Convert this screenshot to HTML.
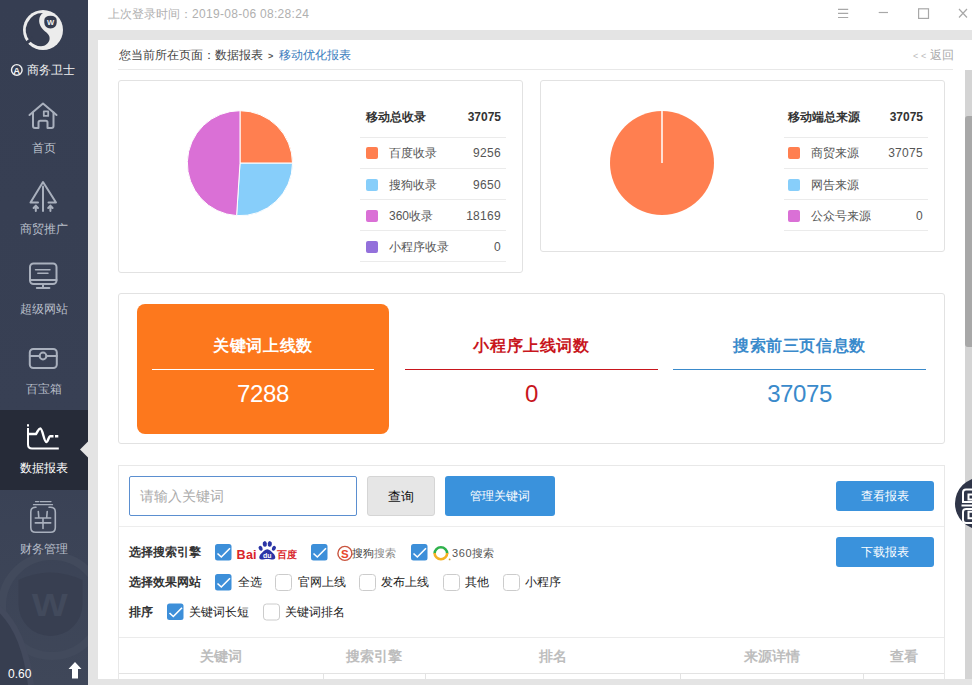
<!DOCTYPE html>
<html><head><meta charset="utf-8">
<style>
*{margin:0;padding:0;box-sizing:border-box;}
html,body{width:972px;height:685px;overflow:hidden;background:#e4e4e4;font-family:"Liberation Sans",sans-serif;font-size:12px;color:#555;}
.a{position:absolute;}
.t{position:absolute;white-space:nowrap;line-height:1;}
#side{left:0;top:0;width:88px;height:685px;background:#373e51;overflow:hidden;}
.nav{position:absolute;left:0;width:88px;height:80px;}
.nav .lb{position:absolute;left:0;width:88px;text-align:center;font-size:12px;color:#b9bfca;line-height:12px;}
.nav svg{position:absolute;left:0;top:0;}
#top{left:88px;top:0;width:884px;height:30px;background:#fff;}
#main{left:98px;top:40px;width:874px;height:639px;background:#fff;}
.card{position:absolute;background:#fff;border:1px solid #e2e2e2;border-radius:3px;}
.lg{position:absolute;font-size:12px;color:#555;}
.lg .row{position:absolute;left:0;height:31px;border-bottom:1px solid #ebebeb;}
.sq{position:absolute;width:12px;height:12px;border-radius:2px;}
.cb{position:absolute;width:16px;height:16px;border-radius:2px;background:#3d8fd9;}
.cbu{position:absolute;width:16px;height:16px;border-radius:3px;background:#fff;border:1px solid #cfcfcf;}
.btn{position:absolute;background:#3a92dc;color:#fff;border-radius:3px;text-align:center;font-size:12px;}
</style></head><body>
<div id="side" class="a">
<svg class="a" style="left:0;top:0" width="88" height="685" viewBox="0 0 88 685">
  <defs>
    <linearGradient id="sg" x1="0" y1="0" x2="0" y2="1">
      <stop offset="0" stop-color="#363e52"/>
      <stop offset="0.6" stop-color="#384054"/>
      <stop offset="1" stop-color="#3f4759"/>
    </linearGradient>
  </defs>
  <rect x="0" y="0" width="88" height="685" fill="url(#sg)"/>
  <!-- watermark -->
  <circle cx="52" cy="606" r="50" fill="none" stroke="#424a5c" stroke-width="8"/>
  <path d="M0,612 C16,626 28,650 33,685 L0,685 Z" fill="#373e50"/>
  <path d="M-4,606 C14,620 26,644 31,685" fill="none" stroke="#434a5d" stroke-width="6"/>
  <path d="M18.5,580 Q50,565 82.5,580 L82.5,604 A32,32 0 0 1 18.5,604 Z" fill="#383f51"/>
  <text x="31.7" y="616" font-family="Liberation Sans" font-weight="bold" font-size="31" textLength="36" lengthAdjust="spacingAndGlyphs" fill="#424a5c">W</text>
  <!-- active -->
  <rect x="0" y="410" width="88" height="80" fill="#262b38"/>
  <polygon points="80,449.5 88,441.5 88,457.5" fill="#e4e4e4"/>
  <!-- logo -->
  <circle cx="43" cy="30" r="20" fill="#ececec"/>
  <path d="M43,13 C40,15 38.5,19 39.5,23.5 C40.5,27 42,28.5 44,30.5 C47,33 50,35 49.6,39 C49.2,43 45.5,46.2 41,46.2 C36.5,46.2 33,44 29.9,40.9 A17,17 0 0 1 43,13 Z" fill="#363d50"/>
  <line x1="33" y1="37.9" x2="25.2" y2="44" stroke="#363d50" stroke-width="3.2"/>
  <path d="M44.3,20 Q44.5,16 50.5,15.8 Q56.5,16 56.7,20 L56.7,22.5 Q56.5,28 50.5,28.6 Q44.5,28 44.3,22.5 Z" fill="#363d50"/>
  <text x="50.5" y="25" text-anchor="middle" font-family="Liberation Sans" font-weight="bold" font-size="7.6" fill="#f4f4f4">W</text>
  <circle cx="16.8" cy="69.9" r="5.3" fill="none" stroke="#f2f2f2" stroke-width="1.4"/>
  <text x="16.8" y="73.5" text-anchor="middle" font-family="Liberation Sans" font-weight="bold" font-size="9.5" fill="#f2f2f2">A</text>
  <g fill="none" stroke="#a9b0bd" stroke-width="2" stroke-linecap="round" stroke-linejoin="round">
    <!-- house -->
    <polyline points="29.5,115 43,103.5 56.5,115"/>
    <path d="M33,112.5 L33,126 Q33,128 35,128 L38.5,128 L38.5,122.5 Q38.5,120.8 40.3,120.8 L45.7,120.8 Q47.5,120.8 47.5,122.5 L47.5,128 L51.5,128 Q53.5,128 53.5,126 L53.5,112.5"/>
    <rect x="43.8" y="111.3" width="4.4" height="4.6" stroke-width="1.8"/>
    <!-- arrow -->
    <path d="M38,202.5 L30.5,202.5 L43,182 L56,202.5 L48.5,202.5"/>
    <path d="M43,186.5 L43,211"/>
    <path d="M35.8,211 L35.8,206 M33.6,208 L35.8,205.6 L38,208"/>
    <path d="M50.4,211 L50.4,206 M48.2,208 L50.4,205.6 L52.6,208"/>
    <!-- monitor -->
    <rect x="30" y="263.5" width="26.5" height="20.5" rx="3.5"/>
    <path d="M30,280 L56.5,280"/>
    <path d="M35.5,269.8 L50,269.8 M37.8,273.3 L48,273.3" stroke-width="1.5"/>
    <path d="M43,284 L43,287.8 M36.8,288 L49.4,288"/>
    <!-- box -->
    <rect x="29.8" y="349" width="27" height="19" rx="3.5"/>
    <path d="M29.8,356 L39.6,356 M46.4,356 L56.8,356"/>
    <circle cx="43" cy="356" r="3.4"/>
    <!-- finance -->
    <path d="M35.5,501.6 L38.6,501.6 M40.2,501.6 L51,501.6 M33.5,504.7 L52.5,504.7" stroke-width="1.3"/>
    <path d="M36,507.3 L35.5,507.3 Q30.8,507.3 30.8,512 L30.8,527.6 Q30.8,532.3 35.5,532.3 L50.6,532.3 Q55.3,532.3 55.3,527.6 L55.3,512 Q55.3,507.3 50.6,507.3 L49,507.3" stroke-width="1.6"/>
    <path d="M38.3,511.5 L38.8,517.5 M47.2,511.5 L46.7,517.5 M35.3,518 L50.7,518 M35.3,522.9 L50.7,522.9 M43,518 L43,528.5" stroke-width="1.6"/>
  </g>
  <g fill="none" stroke="#ffffff" stroke-width="2" stroke-linecap="butt" stroke-linejoin="round">
    <path d="M28,424.3 L28,426.5 M28,428 L28,444.5 Q28,448.5 32,448.5 L58.8,448.5"/>
    <path d="M28,434 L36,434 C38,431 38.6,428.5 40.3,428.5 C42.6,428.5 44,442 46.3,442 C48,442 48.6,436.4 50,436.3 L53.5,436.3 M55,436.3 L58.3,436.3" stroke-width="2.4"/>
  </g>
  <!-- upload arrow -->
  <path d="M75,662 L81.5,669 L78,669 L78,678.5 L72,678.5 L72,669 L68.5,669 Z" fill="#ffffff"/>
</svg>
<div class="t" style="left:27px;top:64px;font-size:12px;color:#f2f2f2;">商务卫士</div>
<div class="t" style="left:0;width:88px;text-align:center;top:142px;color:#b9bfca;">首页</div>
<div class="t" style="left:0;width:88px;text-align:center;top:223px;color:#b9bfca;">商贸推广</div>
<div class="t" style="left:0;width:88px;text-align:center;top:303px;color:#b9bfca;">超级网站</div>
<div class="t" style="left:0;width:88px;text-align:center;top:383px;color:#b9bfca;">百宝箱</div>
<div class="t" style="left:0;width:88px;text-align:center;top:462px;color:#ffffff;">数据报表</div>
<div class="t" style="left:0;width:88px;text-align:center;top:543px;color:#b9bfca;">财务管理</div>
<div class="t" style="left:8px;top:668px;font-size:12px;color:#ffffff;">0.60</div>
</div>
<div id="top" class="a">
  <div class="t" style="left:20px;top:8px;font-size:12px;color:#b0b0b0;">上次登录时间：<span style="letter-spacing:0.3px">2019-08-06 08:28:24</span></div>
  <svg class="a" style="left:0;top:0" width="884" height="30" viewBox="88 0 884 30">
    <g stroke="#a8a8a8" stroke-width="1.2" fill="none">
      <path d="M838,9.3 L848.2,9.3 M838,13.4 L848.2,13.4 M838,17.5 L848.2,17.5"/>
      <path d="M878.7,12.5 L888,12.5"/>
      <rect x="918.6" y="8.8" width="9.9" height="9.6"/>
      <path d="M959,9 L967,17.5 M967,9 L959,17.5"/>
    </g>
  </svg>
</div>
<div id="main" class="a">
  <div class="t" style="left:21px;top:9px;color:#444;">您当前所在页面：数据报表</div>
  <div class="t" style="left:170px;top:12px;color:#555;font-size:9px;font-weight:bold;">&gt;</div>
  <div class="t" style="left:181px;top:9px;color:#3a7cbd;">移动优化报表</div>
  <div class="t" style="left:815px;top:12px;color:#bbb;font-size:9px;">&lt;</div><div class="t" style="left:823px;top:12px;color:#bbb;font-size:9px;">&lt;</div><div class="t" style="left:832px;top:9px;color:#aaa;">返回</div>
  <div class="a" style="left:20px;top:29px;width:835px;height:1px;background:#e8e8e8;"></div>
</div>
<!-- scrollbar -->
<div class="a" style="left:965px;top:70px;width:7px;height:609px;background:#d4d4d4;"></div>
<div class="a" style="left:965px;top:116px;width:7px;height:231px;background:#a8a8a8;border-radius:3px 0 0 3px;"></div>
<div class="a" style="left:88px;top:679px;width:884px;height:6px;background:#e4e4e4;"></div>

<!-- card 1 -->
<div class="card" style="left:118px;top:80px;width:405px;height:193px;"></div>
<svg class="a" style="left:180px;top:103px" width="120" height="120" viewBox="180 103 120 120">
  <path d="M240,163.2 L240,110.7 A52.5,52.5 0 0 1 292.5,163.2 Z" fill="#ff7f50" stroke="#fff" stroke-width="1"/>
  <path d="M240,163.2 L292.5,163.2 A52.5,52.5 0 0 1 236.6,215.6 Z" fill="#87cefa" stroke="#fff" stroke-width="1"/>
  <path d="M240,163.2 L236.6,215.6 A52.5,52.5 0 0 1 240,110.7 Z" fill="#da70d6" stroke="#fff" stroke-width="1"/>
</svg>
<div class="a" style="left:360px;top:106px;width:146px;">
  <div class="t" style="left:6px;top:5px;font-weight:bold;color:#333;">移动总收录</div>
  <div class="t" style="right:5px;top:5px;font-weight:bold;color:#333;">37075</div>
  <div class="a" style="left:0;top:31px;width:146px;height:1px;background:#ebebeb;"></div>
  <div class="sq" style="left:6px;top:40.6px;background:#ff7f50;"></div>
  <div class="t" style="left:29px;top:41px;">百度收录</div>
  <div class="t" style="right:5px;top:41px;letter-spacing:0.3px;">9256</div>
  <div class="a" style="left:0;top:62px;width:146px;height:1px;background:#ebebeb;"></div>
  <div class="sq" style="left:6px;top:72.6px;background:#87cefa;"></div>
  <div class="t" style="left:29px;top:73px;">搜狗收录</div>
  <div class="t" style="right:5px;top:73px;letter-spacing:0.3px;">9650</div>
  <div class="a" style="left:0;top:93px;width:146px;height:1px;background:#ebebeb;"></div>
  <div class="sq" style="left:6px;top:103.6px;background:#da70d6;"></div>
  <div class="t" style="left:29px;top:104px;">360收录</div>
  <div class="t" style="right:5px;top:104px;letter-spacing:0.3px;">18169</div>
  <div class="a" style="left:0;top:124px;width:146px;height:1px;background:#ebebeb;"></div>
  <div class="sq" style="left:6px;top:134.6px;background:#9370db;"></div>
  <div class="t" style="left:29px;top:135px;">小程序收录</div>
  <div class="t" style="right:5px;top:135px;letter-spacing:0.3px;">0</div>
  <div class="a" style="left:0;top:155px;width:146px;height:1px;background:#ebebeb;"></div>
</div>

<!-- card 2 -->
<div class="card" style="left:540px;top:80px;width:405px;height:172px;"></div>
<svg class="a" style="left:600px;top:103px" width="120" height="120" viewBox="600 103 120 120">
  <circle cx="662" cy="163" r="52" fill="#ff7f50"/>
  <path d="M662,163 L662,111" stroke="#fff" stroke-width="1.5"/>
</svg>
<div class="a" style="left:784px;top:106px;width:144px;">
  <div class="t" style="left:4px;top:5px;font-weight:bold;color:#333;">移动端总来源</div>
  <div class="t" style="right:5px;top:5px;font-weight:bold;color:#333;">37075</div>
  <div class="a" style="left:0;top:31px;width:144px;height:1px;background:#ebebeb;"></div>
  <div class="sq" style="left:4px;top:40.6px;background:#ff7f50;"></div>
  <div class="t" style="left:27px;top:41px;">商贸来源</div>
  <div class="t" style="right:5px;top:41px;letter-spacing:0.3px;">37075</div>
  <div class="a" style="left:0;top:62px;width:144px;height:1px;background:#ebebeb;"></div>
  <div class="sq" style="left:4px;top:72.6px;background:#87cefa;"></div>
  <div class="t" style="left:27px;top:73px;">网告来源</div>
  <div class="a" style="left:0;top:93px;width:144px;height:1px;background:#ebebeb;"></div>
  <div class="sq" style="left:4px;top:103.6px;background:#da70d6;"></div>
  <div class="t" style="left:27px;top:104px;">公众号来源</div>
  <div class="t" style="right:5px;top:104px;letter-spacing:0.3px;">0</div>
  <div class="a" style="left:0;top:124px;width:144px;height:1px;background:#ebebeb;"></div>
</div>

<!-- stats card -->
<div class="card" style="left:118px;top:293px;width:827px;height:151px;"></div>
<div class="a" style="left:137px;top:304px;width:252px;height:130px;background:#fd781d;border-radius:8px;"></div>
<div class="t" style="left:137px;width:252px;text-align:center;top:338px;font-size:16px;font-weight:bold;letter-spacing:0.6px;color:#fff;">关键词上线数</div>
<div class="a" style="left:152px;top:369px;width:222px;height:1px;background:#fff;"></div>
<div class="t" style="left:137px;width:252px;text-align:center;top:382px;font-size:24px;letter-spacing:-0.4px;color:#fff;">7288</div>

<div class="t" style="left:405px;width:253px;text-align:center;top:338px;font-size:16px;font-weight:bold;letter-spacing:0.6px;color:#c8161d;">小程序上线词数</div>
<div class="a" style="left:405px;top:369px;width:253px;height:1px;background:#c8161d;"></div>
<div class="t" style="left:405px;width:253px;text-align:center;top:382px;font-size:24px;letter-spacing:-0.4px;color:#c8161d;">0</div>

<div class="t" style="left:673px;width:253px;text-align:center;top:338px;font-size:16px;font-weight:bold;letter-spacing:0.6px;color:#3a8acb;">搜索前三页信息数</div>
<div class="a" style="left:673px;top:369px;width:253px;height:1px;background:#3a8acb;"></div>
<div class="t" style="left:673px;width:253px;text-align:center;top:382px;font-size:24px;letter-spacing:-0.4px;color:#3a8acb;">37075</div>

<!-- filter card -->
<div class="a" style="left:118px;top:465px;width:827px;height:214px;border:1px solid #e8e8e8;border-bottom:none;background:#fff;"></div>
<div class="a" style="left:129px;top:476px;width:228px;height:40px;border:1px solid #5b8fd0;border-radius:2px;background:#fff;"></div>
<div class="t" style="left:140px;top:489px;font-size:14px;color:#aaa;">请输入关键词</div>
<div class="a" style="left:367px;top:476px;width:68px;height:40px;border:1px solid #d5d5d5;border-radius:3px;background:#e6e6e6;"></div>
<div class="t" style="left:367px;width:68px;text-align:center;top:490px;font-size:13px;color:#111;">查询</div>
<div class="btn" style="left:445px;top:476px;width:110px;height:40px;line-height:40px;">管理关键词</div>
<div class="btn" style="left:836px;top:481px;width:98px;height:30px;line-height:30px;">查看报表</div>
<div class="a" style="left:119px;top:526px;width:825px;height:1px;background:#ededed;"></div>
<div class="btn" style="left:836px;top:537px;width:98px;height:30px;line-height:30px;">下载报表</div>

<div class="t" style="left:129px;top:546px;font-weight:bold;color:#333;">选择搜索引擎</div>
<div class="t" style="left:129px;top:576px;font-weight:bold;color:#333;">选择效果网站</div>
<div class="t" style="left:129px;top:606px;font-weight:bold;color:#333;">排序</div>

<svg class="a" style="left:0;top:0" width="972" height="685" viewBox="0 0 972 685">
  <defs>
    <g id="ck"><rect x="0" y="0" width="16.5" height="16.5" rx="2.5" fill="#3d8fd9"/><path d="M2.5,9.5 L6.3,13 L15,4.2" fill="none" stroke="#fff" stroke-width="1.6"/></g>
    <g id="uk"><rect x="0.5" y="0.5" width="16" height="16" rx="3" fill="#fff" stroke="#cccccc" stroke-width="1"/></g>
  </defs>
  <use href="#ck" x="215" y="544"/>
  <use href="#ck" x="311" y="544"/>
  <use href="#ck" x="411" y="544"/>
  <use href="#ck" x="215" y="574"/>
  <use href="#uk" x="275" y="574"/>
  <use href="#uk" x="359" y="574"/>
  <use href="#uk" x="443" y="574"/>
  <use href="#uk" x="503" y="574"/>
  <use href="#ck" x="167" y="603.5"/>
  <use href="#uk" x="263" y="603.5"/>
  <!-- baidu -->
  <text x="236.6" y="559.2" font-family="Liberation Sans" font-weight="bold" font-size="12.6" fill="#d9262b" letter-spacing="0.2">Bai</text>
  <g fill="#2b35a6">
    <ellipse cx="260.6" cy="548.3" rx="1.9" ry="2.6" transform="rotate(-25 260.6 548.3)"/>
    <ellipse cx="264.8" cy="543.9" rx="2.1" ry="2.8" transform="rotate(-8 264.8 543.9)"/>
    <ellipse cx="269.8" cy="543.9" rx="2.1" ry="2.8" transform="rotate(8 269.8 543.9)"/>
    <ellipse cx="273.9" cy="548.3" rx="1.9" ry="2.6" transform="rotate(25 273.9 548.3)"/>
    <path d="M267.3,549.3 C265,549.3 263,551.8 261,553.8 C259,555.8 258.3,559.5 261.5,559.5 C263.5,559.5 265,559 267.3,559 C269.5,559 271,559.5 273,559.5 C276.3,559.5 275.6,555.8 273.6,553.8 C271.6,551.8 269.6,549.3 267.3,549.3 Z"/>
  </g>
  <text x="267.2" y="558.2" text-anchor="middle" font-family="Liberation Sans" font-weight="bold" font-size="7" fill="#fff">du</text>
  <!-- sogou -->
  <circle cx="344.9" cy="553.4" r="7" fill="none" stroke="#c9553f" stroke-width="1.4"/>
  <text x="344.9" y="557.6" text-anchor="middle" font-family="Liberation Sans" font-weight="bold" font-size="11.5" fill="#e8452b">S</text>
  <!-- 360 -->
  <path d="M434.6,553.5 A6.3,6.3 0 0 1 447.2,553.5" fill="none" stroke="#2fb24c" stroke-width="2.6"/>
  <path d="M447.2,553 A6.3,6.3 0 0 1 434.6,553" fill="none" stroke="#f4b122" stroke-width="2.6"/>
  <circle cx="449.6" cy="559.4" r="0.9" fill="#c8a030"/>
  <!-- floating qr -->
  <circle cx="981" cy="503.5" r="26" fill="#2f3548"/>
  <g fill="none" stroke="#fff" stroke-width="2">
    <path d="M972,489.5 L966,489.5 Q963,489.5 963,492.5 L963,502 L972,502"/>
    <path d="M972,494.5 L968.5,494.5 L968.5,499.5 L972,499.5"/>
    <path d="M961.5,505.5 L972,505.5"/>
    <path d="M972,509 L966,509 Q963,509 963,512 L963,520 Q963,523 966,523 L972,523"/>
    <path d="M972,511.8 L968.5,511.8 L968.5,518.3 L972,518.3"/>
  </g>
</svg>
<div class="t" style="left:277px;top:550px;font-size:10px;color:#d9262b;font-weight:bold;">百度</div>
<div class="t" style="left:352px;top:548px;font-size:11px;color:#444;">搜狗</div>
<div class="t" style="left:374px;top:548px;font-size:11px;color:#888;">搜索</div>
<div class="t" style="left:452px;top:548px;font-size:11px;color:#555;"><span style="letter-spacing:0.6px">360</span>搜索</div>
<div class="t" style="left:238px;top:576px;color:#222;">全选</div>
<div class="t" style="left:298px;top:576px;color:#222;">官网上线</div>
<div class="t" style="left:381px;top:576px;color:#222;">发布上线</div>
<div class="t" style="left:465px;top:576px;color:#222;">其他</div>
<div class="t" style="left:525px;top:576px;color:#222;">小程序</div>
<div class="t" style="left:189px;top:606px;color:#222;">关键词长短</div>
<div class="t" style="left:285px;top:606px;color:#222;">关键词排名</div>

<!-- table header -->
<div class="a" style="left:119px;top:637px;width:825px;height:1px;background:#ebebeb;"></div>
<div class="a" style="left:119px;top:673px;width:825px;height:1px;background:#e3e3e3;"></div>
<div class="a" style="left:323px;top:674px;width:1px;height:5px;background:#e3e3e3;"></div>
<div class="a" style="left:425px;top:674px;width:1px;height:5px;background:#e3e3e3;"></div>
<div class="a" style="left:680px;top:674px;width:1px;height:5px;background:#e3e3e3;"></div>
<div class="a" style="left:863px;top:674px;width:1px;height:5px;background:#e3e3e3;"></div>
<div class="t" style="left:119px;width:204px;text-align:center;top:649px;font-size:14px;font-weight:bold;color:#bdbdbd;">关键词</div>
<div class="t" style="left:323px;width:102px;text-align:center;top:649px;font-size:14px;font-weight:bold;color:#bdbdbd;">搜索引擎</div>
<div class="t" style="left:425px;width:255px;text-align:center;top:649px;font-size:14px;font-weight:bold;color:#bdbdbd;">排名</div>
<div class="t" style="left:680px;width:183px;text-align:center;top:649px;font-size:14px;font-weight:bold;color:#bdbdbd;">来源详情</div>
<div class="t" style="left:863px;width:81px;text-align:center;top:649px;font-size:14px;font-weight:bold;color:#bdbdbd;">查看</div>
</body></html>
